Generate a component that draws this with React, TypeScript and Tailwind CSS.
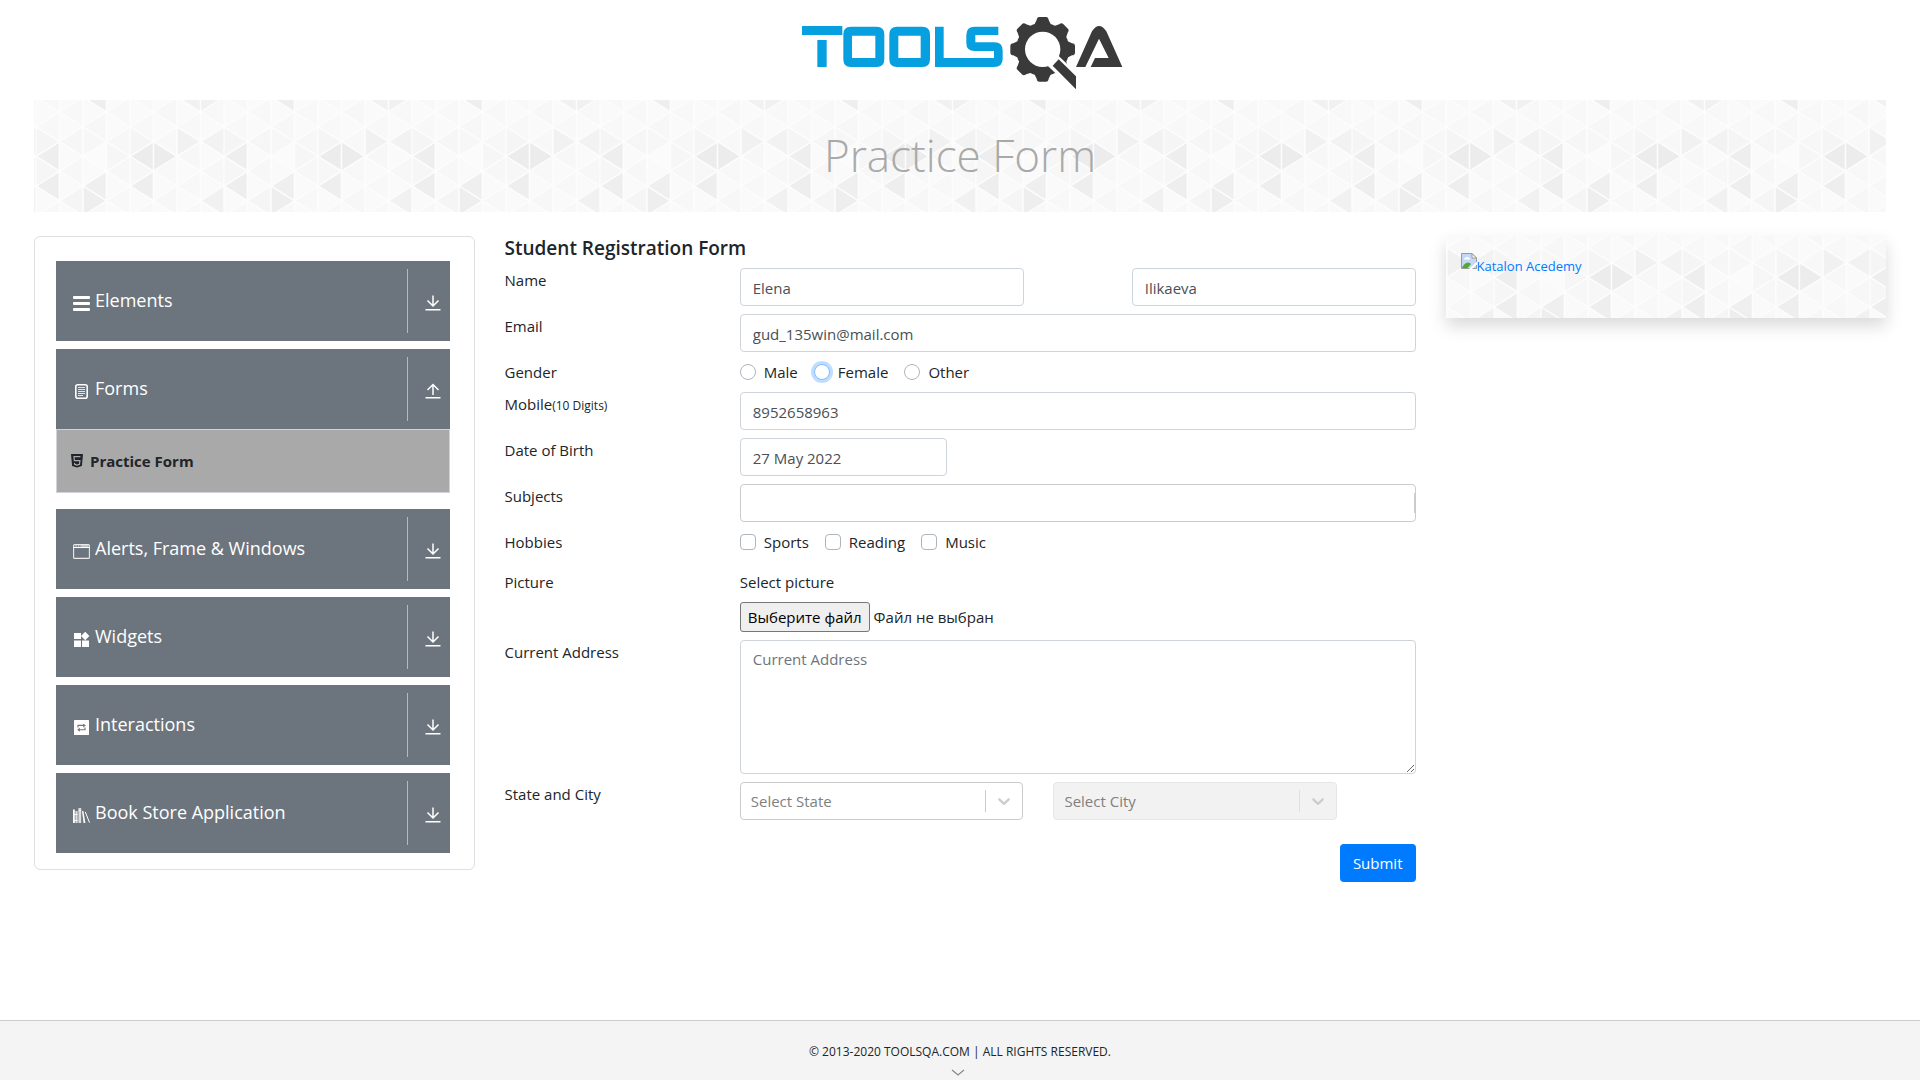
import { useId, type ReactNode } from "react";

/* ---------- Decorative triangle background ---------- */

const STRIP = 23.5;
const PITCH = 29.6;
const ODD_Y = 12;
const EVEN_Y = 26.8;

// "strip:direction:row" -> fill
const SHADES: Record<string, string> = {
  "0:L:1": "#eeeeee",
  "0:L:2": "#eeeeee",
  "0:R:1": "#f5f5f5",
  "0:R:2": "#f6f6f6",
  "1:L:1": "#f6f6f6",
  "1:L:2": "#f7f7f7",
  "1:L:3": "#f5f5f5",
  "2:L:-1": "#eeeeee",
  "2:L:0": "#f7f7f7",
  "2:L:1": "#fbfbfb",
  "2:L:2": "#efefef",
  "2:R:3": "#eeeeee",
  "2:R:1": "#f7f7f7",
  "3:L:1": "#f7f7f7",
  "3:R:1": "#f6f6f6",
  "3:L:2": "#f7f7f7",
  "4:L:1": "#ececec",
  "4:L:2": "#eeeeee",
  "4:R:1": "#f5f5f5",
  "4:R:2": "#f7f7f7",
  "5:R:1": "#ececec",
  "5:L:0": "#f7f7f7",
  "5:L:3": "#f7f7f7",
  "6:L:-1": "#f1f1f1",
  "6:R:1": "#f1f1f1",
  "6:L:1": "#f7f7f7",
  "7:R:-1": "#f1f1f1",
  "7:L:1": "#f2f2f2",
  "7:L:3": "#f1f1f1",
  "7:L:2": "#f7f7f7",
};

const TRIANGLES = Array.from({ length: 8 }).flatMap((_, k) =>
  [-2, -1, 0, 1, 2, 3, 4].flatMap((row) =>
    (["L", "R"] as const).map((dir) => {
      const onEven = dir === "L" ? k % 2 === 0 : k % 2 === 1;
      const cy = (onEven ? EVEN_Y : ODD_Y) + row * PITCH;
      const apex = dir === "L" ? k * STRIP : (k + 1) * STRIP;
      const base = dir === "L" ? (k + 1) * STRIP : k * STRIP;
      return {
        key: `${k}:${dir}:${row}`,
        points: `${apex},${cy} ${base},${cy - PITCH / 2} ${base},${cy + PITCH / 2}`,
        fallback: dir === "L" ? "#f8f8f8" : "#fafafa",
      };
    })
  )
);

function TriangleBackdrop({ x, y }: { x: number; y: number }) {
  const id = useId();
  return (
    <svg aria-hidden="true" className="absolute inset-0 h-full w-full">
      <defs>
        <pattern id={id} width={STRIP * 8} height="148" patternUnits="userSpaceOnUse" patternTransform={`translate(${x} ${y})`}>
          <rect width="188" height="148" fill="#fafafa" />
          {TRIANGLES.map((t) => (
            <polygon key={t.key} points={t.points} fill={SHADES[t.key] ?? t.fallback} stroke="#fdfdfd" strokeWidth="1.4" />
          ))}
        </pattern>
      </defs>
      <rect width="100%" height="100%" fill={`url(#${id})`} />
    </svg>
  );
}

/* ---------- Logo ---------- */

function Logo() {
  return (
    <svg viewBox="0 0 1080 300" className="h-[100px] w-[360px]" role="img" aria-label="ToolsQA">
      <g fill="#069fdf">
        <path d="M66 78H187V105H66ZM112 120H140V201H112Z" />
        <path fillRule="evenodd" d="M212 80H290Q313 80 313 103V178Q313 201 290 201H212Q190 201 190 178V103Q190 80 212 80ZM216 107V174H286V107Z" />
        <path fillRule="evenodd" d="M351 80H427Q450 80 450 103V178Q450 201 427 201H351Q328 201 328 178V103Q328 80 351 80ZM355 107V174H422V107Z" />
        <path d="M655 80H584Q559 80 559 105V130Q559 153 584 153H642V174H491V80H465V201H642Q668 201 668 176V152Q668 127 643 127H586V105H655Z" />
      </g>
      <g fill="#3a3a3b">
        {[0, 45, 90, 135, 180, 225, 270, 315].map((a) => (
          <path key={a} transform={`rotate(${a} 788 148)`} d="M762 76L770 60Q771 51 778 51H798Q805 51 806 60L814 76Z" />
        ))}
        <circle cx="788" cy="148" r="80" />
        <circle cx="788" cy="148" r="53" fill="#fff" />
        <path d="M836 168L900 228V290L803 197Z" fill="#fff" />
        <path d="M836 178L888 229V268L818 197Z" />
        <path d="M888 201L936 94Q957 62 979 94L1027 201H932L945 174H986L957 116L916 201Z" />
      </g>
    </svg>
  );
}

/* ---------- Icons ---------- */

function Icon({ children, className = "h-4 w-[17px]", box = "0 0 17 16" }: { children: ReactNode; className?: string; box?: string }) {
  return (
    <svg viewBox={box} className={`shrink-0 ${className}`} fill="currentColor" aria-hidden="true">
      {children}
    </svg>
  );
}

const ElementsIcon = () => (
  <Icon>
    <rect y="1" width="17" height="3" rx="1" />
    <rect y="7" width="17" height="3" rx="1" />
    <rect y="13" width="17" height="3" rx="1" />
  </Icon>
);

const FormsIcon = () => (
  <Icon>
    <rect x="2.8" y="1.8" width="11.4" height="13.4" rx="2" fill="none" stroke="currentColor" strokeWidth="1.6" />
    <path d="M5 4.5h7M5 6.5h7M5 8.5h7M5 10.5h7M5 12.5h5" stroke="currentColor" strokeWidth="1" opacity="0.8" />
  </Icon>
);

const WindowIcon = () => (
  <Icon>
    <rect x="0.6" y="1.6" width="15.8" height="13.8" rx="1" fill="none" stroke="currentColor" strokeWidth="1.1" opacity="0.85" />
    <path d="M0.6 4.5h15.8" stroke="currentColor" strokeWidth="1.1" />
    <path d="M2.5 3h1.2M5 3h1.2M7.5 3h8" stroke="currentColor" strokeWidth="1.4" opacity="0.7" />
  </Icon>
);

const WidgetsIcon = () => (
  <Icon>
    <path d="M1 2h7v6H1zM1 9.5h7V16H1zM9 9.5h7V16H9zM12.2 0.8L16.4 5l-4.2 4.2L8 5z" />
  </Icon>
);

const InteractionsIcon = () => (
  <Icon>
    <rect x="1" y="1" width="15" height="15" rx="0.6" />
    <path d="M5 8.4V6.4h6M12 8.6v2.2H6" fill="none" stroke="#6c757d" strokeWidth="1.1" />
    <path d="M10.2 4.4l2.6 2-2.6 2zM6.8 8.8l-2.6 2 2.6 2z" fill="#6c757d" />
  </Icon>
);

const BooksIcon = () => (
  <Icon>
    <path d="M0 2.5h1.8V16H0z" />
    <path d="M2.4 4h2.2v12H2.4zM5.4 1h2.8v15H5.4z" opacity="0.75" />
    <path d="M0 7h4.6v1H0zM0 13h4.6v1H0zM5.4 3h2.8v0.8H5.4z" opacity="0.9" />
    <path d="M9 4h1.4l2 12H10.6z" />
    <path d="M12.3 5l4.2 10.6" stroke="currentColor" strokeWidth="1" fill="none" />
  </Icon>
);

function ToggleArrow({ up = false }: { up?: boolean }) {
  return (
    <Icon className="h-4 w-4" box="0 0 16 16">
      <path
        d={up ? "M8 12V1.5M2.5 7L8 1.5L13.5 7M0.5 14.8h15" : "M8 0.5V11M2.5 5.5L8 11L13.5 5.5M0.5 14.8h15"}
        fill="none"
        stroke="currentColor"
        strokeWidth="1.5"
      />
    </Icon>
  );
}

const Html5Icon = () => (
  <Icon className="h-[14px] w-3" box="0 0 12 14">
    <path d="M0 0h12l-1.1 12L6 13.6 1.1 12z" />
    <path d="M9.4 2.6H3l.3 4h5.6l-.4 3.6L6 11l-2.4-.8-.1-1.2" fill="none" stroke="#a9a9a9" strokeWidth="1.2" />
  </Icon>
);

const BrokenImageIcon = () => (
  <svg viewBox="0 0 16 16" className="h-4 w-4 shrink-0" aria-hidden="true">
    <path d="M0.5 0.5H11L15.5 5V15.5H0.5Z" fill="#c5d7f5" stroke="#9a9a9a" />
    <path d="M3 6.5q0-2 2-2 1-1.6 2.4 0 1.6 0 1.6 2z" fill="#fff" />
    <path d="M1 15q2-5 6-5.5 2 0 3 1.5L6.5 15z" fill="#4ea832" />
    <path d="M16 8.5L8 16h3l5-4.5z" fill="#fff" />
    <path d="M11 0.5V5h4.5z" fill="#fff" stroke="#9a9a9a" />
  </svg>
);

/* ---------- Sidebar ---------- */

function MenuGroup({ icon, title, open = false, children }: { icon: ReactNode; title: string; open?: boolean; children?: ReactNode }) {
  return (
    <div>
      <button type="button" aria-expanded={open} className="flex h-20 w-full items-center bg-[#6c757d] py-2 text-left text-white">
        <span className="flex flex-1 items-center gap-[5px] pb-[2px] pl-[17px] text-[18px] leading-6">
          <span className="pt-[6px]">{icon}</span>
          {title}
        </span>
        <span className="flex h-full w-[43px] items-center justify-end border-l border-[#b5babe] pt-1 pr-[9px]">
          <ToggleArrow up={open} />
        </span>
      </button>
      {children}
    </div>
  );
}

function Sidebar() {
  return (
    <nav className="flex flex-col gap-2 rounded-md border border-[#dfdfdf] pt-6 pr-6 pb-4 pl-[21px]">
      <MenuGroup icon={<ElementsIcon />} title="Elements" />
      <MenuGroup icon={<FormsIcon />} title="Forms" open>
        <a href="#practice-form" className="mb-2 flex h-16 items-center gap-[7px] border border-[#d0d3d8] bg-[#a9a9a9] pl-[14px] text-[15px] font-bold text-[#212529]">
          <Html5Icon />
          Practice Form
        </a>
      </MenuGroup>
      <MenuGroup icon={<WindowIcon />} title="Alerts, Frame & Windows" />
      <MenuGroup icon={<WidgetsIcon />} title="Widgets" />
      <MenuGroup icon={<InteractionsIcon />} title="Interactions" />
      <MenuGroup icon={<BooksIcon />} title="Book Store Application" />
    </nav>
  );
}

/* ---------- Form ---------- */

const FIELD = "block h-[38px] w-full rounded border border-[#ced4da] bg-white px-3 pt-[2px] text-[15px] text-[#495057] outline-none";

function Row({ label, htmlFor, children }: { label: ReactNode; htmlFor?: string; children: ReactNode }) {
  return (
    <div className="-mx-[15px] flex items-start">
      <div className="w-1/4 px-[15px]">
        {htmlFor ? (
          <label htmlFor={htmlFor} className="block leading-6">
            {label}
          </label>
        ) : (
          <span className="block leading-6">{label}</span>
        )}
      </div>
      <div className="w-3/4 px-[15px]">{children}</div>
    </div>
  );
}

function Choice({ type, name, label, focused = false }: { type: "radio" | "checkbox"; name: string; label: string; focused?: boolean }) {
  const shape = type === "radio" ? "rounded-full" : "rounded";
  const ring = focused ? "border-[#80bdff] shadow-[0_0_0_3px_rgba(0,123,255,0.25)]" : "border-[#adb5bd]";
  return (
    <label className="mr-4 flex h-6 items-center gap-2">
      <input type={type} name={name} className={`h-4 w-4 appearance-none border bg-white ${shape} ${ring}`} />
      {label}
    </label>
  );
}

function Dropdown({ label, disabled = false }: { label: string; disabled?: boolean }) {
  return (
    <div className="relative">
      <select
        aria-label={label}
        disabled={disabled}
        className="h-[38px] w-full appearance-none rounded border border-[#cccccc] bg-white pl-[10px] text-[15px] text-[#808080] opacity-100 outline-none disabled:border-[#e6e6e6] disabled:bg-[#f2f2f2]"
      >
        <option>{label}</option>
      </select>
      <span className={`pointer-events-none absolute inset-y-2 right-0 flex w-[38px] items-center justify-center border-l pr-px ${disabled ? "border-[#e0e0e0]" : "border-[#cccccc]"}`}>
        <svg viewBox="0 0 20 20" className="h-5 w-5" fill="#cccccc" aria-hidden="true">
          <path d="M4.516 7.548c0.436-0.446 1.043-0.481 1.576 0l3.908 3.747 3.908-3.747c0.533-0.481 1.141-0.446 1.574 0 0.436 0.445 0.408 1.197 0 1.615-0.406 0.418-4.695 4.502-4.695 4.502-0.217 0.223-0.502 0.335-0.787 0.335s-0.57-0.112-0.789-0.335c0 0-4.287-4.084-4.695-4.502s-0.436-1.17 0-1.615z" />
        </svg>
      </span>
    </div>
  );
}

function RegistrationForm() {
  return (
    <form id="practice-form" className="flex flex-col gap-2 text-[15px] text-[#212529]" onSubmit={(e) => e.preventDefault()}>
      <h2 className="pt-px text-[19px] leading-[23px] font-semibold">Student Registration Form</h2>

      <Row label="Name" htmlFor="firstName">
        <div className="flex justify-between">
          <input id="firstName" defaultValue="Elena" className={`${FIELD} max-w-[42%]`} />
          <input aria-label="Last Name" defaultValue="Ilikaeva" className={`${FIELD} max-w-[42%]`} />
        </div>
      </Row>

      <Row label="Email" htmlFor="email">
        <input id="email" type="email" defaultValue="gud_135win@mail.com" className={FIELD} />
      </Row>

      <Row label="Gender">
        <div className="flex">
          <Choice type="radio" name="gender" label="Male" />
          <Choice type="radio" name="gender" label="Female" focused />
          <Choice type="radio" name="gender" label="Other" />
        </div>
      </Row>

      <Row
        htmlFor="mobile"
        label={
          <>
            Mobile<small className="text-xs">(10 Digits)</small>
          </>
        }
      >
        <input id="mobile" type="tel" defaultValue="8952658963" className={FIELD} />
      </Row>

      <Row label="Date of Birth" htmlFor="dob">
        <input id="dob" defaultValue="27 May 2022" className={`${FIELD} max-w-[207px]`} />
      </Row>

      <Row label="Subjects" htmlFor="subjects">
        <div className="flex h-[38px] items-center rounded border border-[#cccccc]">
          <input id="subjects" className="h-full min-w-0 flex-1 bg-transparent px-3 outline-none" />
          <span className="h-5 w-px bg-[#cccccc]" />
        </div>
      </Row>

      <Row label="Hobbies">
        <div className="flex pb-2">
          <Choice type="checkbox" name="hobbies" label="Sports" />
          <Choice type="checkbox" name="hobbies" label="Reading" />
          <Choice type="checkbox" name="hobbies" label="Music" />
        </div>
      </Row>

      <Row label="Picture">
        <label htmlFor="picture" className="mb-2 block leading-6">
          Select picture
        </label>
        <div className="relative flex items-center gap-1">
          <input id="picture" type="file" className="sr-only" />
          <label htmlFor="picture" className="flex h-[30px] items-center rounded-[3px] border border-[#767676] bg-[#efefef] px-[7px] text-black">
            Выберите файл
          </label>
          <span>Файл не выбран</span>
        </div>
      </Row>

      <Row label="Current Address" htmlFor="address">
        <textarea
          id="address"
          placeholder="Current Address"
          className="block h-[134px] w-full resize rounded border border-[#ced4da] px-3 py-[6px] text-[15px] leading-6 text-[#495057] outline-none placeholder:text-[#6c757d]"
        />
      </Row>

      <Row label="State and City">
        <div className="-mx-[15px] flex">
          <div className="w-4/9 px-[15px]">
            <Dropdown label="Select State" />
          </div>
          <div className="w-4/9 px-[15px]">
            <Dropdown label="Select City" disabled />
          </div>
        </div>
      </Row>

      <div className="mt-4 flex justify-end">
        <button type="submit" className="h-[38px] rounded bg-[#007bff] px-[13px] text-white">
          Submit
        </button>
      </div>
    </form>
  );
}

/* ---------- Page ---------- */

export default function App() {
  return (
    <div className="flex min-h-screen flex-col bg-white font-['Open_Sans','Noto_Sans',sans-serif] text-[#212529]">
      <header className="flex h-[100px] justify-center">
        <a href="#home">
          <Logo />
        </a>
      </header>

      <main className="px-[19px]">
        <div className="relative mx-[15px] mb-6 flex h-28 justify-center">
          <TriangleBackdrop x={2} y={0} />
          <h1 className="relative pt-6 text-[44px] leading-[62px] font-light text-[#a9a9a9]">Practice Form</h1>
        </div>

        <div className="flex items-start">
          <div className="w-1/4 px-[15px]">
            <Sidebar />
          </div>
          <div className="w-1/2 px-[15px]">
            <RegistrationForm />
          </div>
          <aside className="w-1/4 px-[15px]">
            <div className="relative h-[82px] shadow-[0_8px_16px_rgba(0,0,0,0.15)]">
              <TriangleBackdrop x={48} y={-15} />
              <a href="#katalon" className="relative flex items-start pt-[17px] pl-[15px] text-[13px] text-[#007bff]">
                <BrokenImageIcon />
                <span className="pt-1">Katalon Acedemy</span>
              </a>
            </div>
          </aside>
        </div>
      </main>

      <footer className="mt-auto flex h-[60px] flex-col items-center border-t border-[#cccccc] bg-[#f4f4f4] pt-[21px] text-xs">
        <span className="leading-5">© 2013-2020 TOOLSQA.COM | ALL RIGHTS RESERVED.</span>
        <svg viewBox="0 0 14 8" className="mt-[7px] mr-1 h-2 w-[14px]" fill="none" stroke="#888888" strokeWidth="1.2" aria-hidden="true">
          <path d="M1 1l6 5 6-5" />
        </svg>
      </footer>
    </div>
  );
}
